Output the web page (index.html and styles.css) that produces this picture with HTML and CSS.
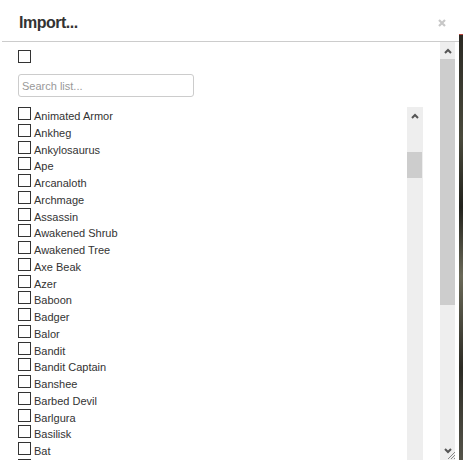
FILE: index.html
```
<!DOCTYPE html>
<html>
<head>
<meta charset="utf-8">
<link rel="stylesheet" href="styles.css">
</head>
<body>
<div class="dialog">
  <div class="header">
    <span class="title">Import...</span>
    <svg class="close" width="8" height="8" viewBox="0 0 8 8"><path d="M1 1L7 7M7 1L1 7" stroke="#c8c8c8" stroke-width="2.2" fill="none"/></svg>
  </div>
  <div class="body">
    <div class="main">
      <span class="cb top-cb"></span>
      <input class="search" type="text" placeholder="Search list...">
      <div class="listwrap">
        <div class="list">
          <div class="row"><span class="cb"></span><span class="lbl">Animated Armor</span></div>
          <div class="row"><span class="cb"></span><span class="lbl">Ankheg</span></div>
          <div class="row"><span class="cb"></span><span class="lbl">Ankylosaurus</span></div>
          <div class="row"><span class="cb"></span><span class="lbl">Ape</span></div>
          <div class="row"><span class="cb"></span><span class="lbl">Arcanaloth</span></div>
          <div class="row"><span class="cb"></span><span class="lbl">Archmage</span></div>
          <div class="row"><span class="cb"></span><span class="lbl">Assassin</span></div>
          <div class="row"><span class="cb"></span><span class="lbl">Awakened Shrub</span></div>
          <div class="row"><span class="cb"></span><span class="lbl">Awakened Tree</span></div>
          <div class="row"><span class="cb"></span><span class="lbl">Axe Beak</span></div>
          <div class="row"><span class="cb"></span><span class="lbl">Azer</span></div>
          <div class="row"><span class="cb"></span><span class="lbl">Baboon</span></div>
          <div class="row"><span class="cb"></span><span class="lbl">Badger</span></div>
          <div class="row"><span class="cb"></span><span class="lbl">Balor</span></div>
          <div class="row"><span class="cb"></span><span class="lbl">Bandit</span></div>
          <div class="row"><span class="cb"></span><span class="lbl">Bandit Captain</span></div>
          <div class="row"><span class="cb"></span><span class="lbl">Banshee</span></div>
          <div class="row"><span class="cb"></span><span class="lbl">Barbed Devil</span></div>
          <div class="row"><span class="cb"></span><span class="lbl">Barlgura</span></div>
          <div class="row"><span class="cb"></span><span class="lbl">Basilisk</span></div>
          <div class="row"><span class="cb"></span><span class="lbl">Bat</span></div>
          <div class="row"><span class="cb"></span><span class="lbl">Bearded Devil</span></div>
        </div>
        <div class="bar inner-bar">
          <div class="btn"><svg width="8" height="6" viewBox="0 0 8 6"><path d="M1 5L4 2L7 5" stroke="#555" stroke-width="2" fill="none"/></svg></div>
          <div class="thumb inner-thumb"></div>
        </div>
      </div>
    </div>
    <div class="bar outer-bar">
      <div class="btn"><svg width="8" height="6" viewBox="0 0 8 6"><path d="M1 5L4 2L7 5" stroke="#555" stroke-width="2" fill="none"/></svg></div>
      <div class="thumb outer-thumb"></div>
      <div class="spacer"></div>
      <div class="btn btn-down"><svg width="8" height="6" viewBox="0 0 8 6"><path d="M1 1L4 4L7 1" stroke="#555" stroke-width="2" fill="none"/></svg></div>
      <svg class="grip" width="9" height="9" viewBox="0 0 9 9"><path d="M8 1L1 8M8 4L4 8M8 7L7 8" stroke="#888" stroke-width="1" fill="none"/></svg>
    </div>
  </div>
</div>
<div class="backdrop"></div>
</body>
</html>
```
FILE: styles.css
```
html, body {
  margin: 0;
  padding: 0;
}
body {
  display: flex;
  height: 460px;
  overflow: hidden;
  background: #fff;
  font-family: "Liberation Sans", Arial, sans-serif;
}
.dialog {
  width: 459px;
  height: 460px;
  flex: none;
  display: flex;
  flex-direction: column;
  background: #fff;
}
.backdrop {
  flex: 1;
  background: linear-gradient(to bottom, #fff 0, #fff 34px, #b8433c 34px, #b8433c 35px, #2b2a24 35px, #4a4a3c 30%, #22221c 45%, #6a6958 60%, #2c2b24 80%, #55544a 100%);
}
.header {
  height: 42px;
  box-sizing: border-box;
  margin-left: 2px;
  border-bottom: 1px solid #ccc;
  display: flex;
  justify-content: space-between;
  align-items: flex-start;
  padding: 13px 13px 0 17px;
}
.title {
  font-size: 16px;
  line-height: 20px;
  font-weight: bold;
  color: #333;
  letter-spacing: -0.5px;
}
.close {
  margin-top: 6px;
}
.body {
  flex: 1;
  min-height: 0;
  display: flex;
}
.main {
  flex: 1;
  min-width: 0;
  display: flex;
  flex-direction: column;
  padding: 8px 0 0 18px;
  overflow: hidden;
}
.cb {
  display: block;
  width: 13px;
  height: 13px;
  box-sizing: border-box;
  border: 1px solid #333;
  background: #fff;
  flex: none;
}
.top-cb {
  margin-bottom: 11px;
}
.search {
  width: 176px;
  height: 23px;
  box-sizing: border-box;
  border: 1px solid #ccc;
  border-radius: 3px;
  padding: 0 3px;
  margin: 0 0 10px 0;
  font-family: "Liberation Sans", Arial, sans-serif;
  font-size: 11px;
  color: #333;
  background: #fff;
  flex: none;
}
.search::placeholder {
  color: #999;
}
.listwrap {
  width: 405px;
  flex: 1;
  min-height: 0;
  display: flex;
  overflow: hidden;
}
.list {
  flex: 1;
}
.row {
  height: 16.75px;
  display: flex;
  align-items: flex-start;
}
.lbl {
  font-size: 11px;
  line-height: 16px;
  padding-top: 1px;
  margin-left: 3px;
  color: #333;
  white-space: nowrap;
}
.bar {
  width: 16px;
  background: #eee;
  display: flex;
  flex-direction: column;
  flex: none;
}
.btn {
  height: 17px;
  display: flex;
  align-items: center;
  justify-content: center;
  flex: none;
}
.thumb {
  background: #cdcdcd;
  flex: none;
}
.inner-thumb {
  margin-top: 28px;
  height: 26px;
  width: 15px;
}
.outer-bar {
  width: 15px;
  margin-right: 4px;
  position: relative;
}
.outer-thumb {
  height: 246px;
}
.spacer {
  flex: 1;
}
.btn-down {
  align-items: flex-start;
  justify-content: flex-start;
  padding-left: 4px;
  padding-top: 6px;
  box-sizing: border-box;
  height: 18px;
}
.grip {
  position: absolute;
  right: -1px;
  bottom: 0;
}
```
